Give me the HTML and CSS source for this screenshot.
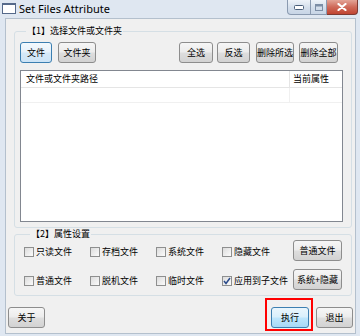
FILE: index.html
```html
<!DOCTYPE html>
<html lang="zh-CN">

<head>
    <meta charset="UTF-8">
    <meta name="viewport" content="width=device-width, initial-scale=1.0">
    <title>Set Files Attribute</title>
    <link rel="stylesheet" href="styles.css">
</head>

<body>
    <div class="window">
        <div class="titlebar">
            <span class="app-icon"></span>
            <span class="title">Set Files Attribute</span>
            <div class="caption-buttons">
                <span class="cap cap-min">
                    <svg width="10" height="5" viewBox="0 0 10 5"><rect x="0.5" y="0.5" width="9" height="4" rx="1" fill="#fff" stroke="#4a5f7a"/></svg>
                </span>
                <span class="cap cap-max">
                    <svg width="8" height="7" viewBox="0 0 8 7"><rect x="0.5" y="0.5" width="7" height="6" fill="none" stroke="#7c8ea6"/><rect x="1" y="1" width="6" height="1.5" fill="#7c8ea6"/></svg>
                </span>
                <span class="cap cap-close">
                    <svg width="10" height="8" viewBox="0 0 10 8"><path d="M1.5 1 L8.5 7 M8.5 1 L1.5 7" stroke="#fff" stroke-width="2.2" stroke-linecap="round"/></svg>
                </span>
            </div>
        </div>

        <div class="client">
            <fieldset class="group group-files">
                <legend>【1】选择文件或文件夹</legend>
                <div class="toolbar">
                    <button class="btn btn-default w32">文件</button>
                    <button class="btn w38 ml6">文件夹</button>
                    <div class="toolbar-right">
                        <button class="btn w34">全选</button>
                        <button class="btn w33 ml4">反选</button>
                        <button class="btn w38 ml6">删除所选</button>
                        <button class="btn w39 ml5">删除全部</button>
                    </div>
                </div>
                <div class="listview">
                    <div class="lv-header">
                        <span class="col-path">文件或文件夹路径</span>
                        <span class="col-attr">当前属性</span>
                    </div>
                    <div class="lv-row">
                        <span class="col-path"></span>
                        <span class="col-attr"></span>
                    </div>
                </div>
            </fieldset>

            <fieldset class="group group-attrs">
                <legend>【2】属性设置</legend>
                <div class="attr-grid">
                    <label class="check"><span class="box"></span>只读文件</label>
                    <label class="check"><span class="box"></span>存档文件</label>
                    <label class="check"><span class="box"></span>系统文件</label>
                    <label class="check"><span class="box"></span>隐藏文件</label>
                    <button class="btn">普通文件</button>

                    <label class="check"><span class="box"></span>普通文件</label>
                    <label class="check"><span class="box"></span>脱机文件</label>
                    <label class="check"><span class="box"></span>临时文件</label>
                    <label class="check"><span class="box checked"><svg width="8" height="8" viewBox="0 0 8 8"><path d="M1 4 L3 6.5 L7 1" fill="none" stroke="#2a4a8a" stroke-width="1.5"/></svg></span>应用到子文件</label>
                    <button class="btn">系统+隐藏</button>
                </div>
            </fieldset>

            <div class="footer">
                <button class="btn w37">关于</button>
                <button class="btn btn-hot w38 run">执行</button>
                <button class="btn w37 ml7">退出</button>
            </div>
        </div>
    </div>
</body>

</html>
```

FILE: styles.css
```css
body {
    margin: 0;
    font-family: "Noto Sans CJK SC", sans-serif;
}

.window {
    width: 360px;
    height: 336px;
    background-color: #dfe7f1;
    overflow: hidden;
}

.titlebar {
    display: flex;
    height: 18px;
}

.app-icon {
    width: 12px;
    height: 8px;
    margin: 3px 0 0 2px;
    background-color: #ffffff;
    border: 1px solid #55698a;
    border-top-width: 2px;
}

.title {
    margin-left: 3px;
    font-family: "Noto Sans", sans-serif;
    font-size: 11px;
    line-height: 17px;
    color: #000000;
}

.caption-buttons {
    display: flex;
    margin-left: auto;
    margin-right: 2px;
    height: 15px;
}

.cap {
    display: flex;
    align-items: center;
    justify-content: center;
    height: 14px;
    border: 1px solid #8a9ab0;
    border-top: none;
    background: linear-gradient(#eef3f9, #d3deeb 55%, #c8d5e6);
}

.cap-min {
    width: 22px;
    border-radius: 0 0 0 4px;
}

.cap-max {
    width: 15px;
    border-left: none;
}

.cap-close {
    width: 30px;
    border-left: none;
    border-color: #7d3a33;
    border-radius: 0 0 4px 0;
    background: linear-gradient(#e3a497, #cf6a5a 50%, #c04532);
}

.client {
    height: 314px;
    margin-left: 5px;
    width: 349px;
    border: 1px solid #b4c0cd;
    background-color: #f0f0f0;
    display: flex;
    flex-direction: column;
}

.group {
    margin: 0 3px 0 8px;
    border: 1px solid #d5dfe5;
    border-radius: 3px;
    min-width: 0;
}

.group legend {
    margin-left: 6px;
    padding: 0 1px;
    font-size: 9px;
    line-height: 12px;
    color: #000000;
}

.group-files {
    margin-top: 6px;
    padding: 5px 8px 5px 5px;
}

.group-attrs {
    padding: 0 8px 5px 9px;
}

.toolbar {
    display: flex;
    height: 21px;
    margin-bottom: 7px;
}

.toolbar-right {
    display: flex;
    margin-left: auto;
    margin-right: 5px;
}

.btn {
    height: 21px;
    padding: 0;
    border: 1px solid #8d8d8d;
    border-radius: 3px;
    background: linear-gradient(#f6f6f6, #ececec 48%, #dedede 52%, #d2d2d2);
    font-family: "Noto Sans CJK SC", sans-serif;
    font-size: 9px;
    color: #000000;
}

.btn-default {
    border-color: #3c7fb1;
    background: linear-gradient(#f4f9fd, #e6f1fa 48%, #d6e9f8 52%, #cde4f6);
}

.btn-hot {
    border-color: #3c7fb1;
    background: linear-gradient(#eaf6fd, #d9f0fc 48%, #bee6fd 52%, #a7d9f5);
}

.run {
    position: relative;
    margin-left: auto;
}

.run::after {
    content: "";
    position: absolute;
    top: -10px;
    left: -7px;
    right: -5px;
    bottom: -4px;
    border: 2px solid #ff0000;
}

.w32 { width: 32px; }
.w33 { width: 33px; }
.w34 { width: 34px; }
.w37 { width: 37px; }
.w38 { width: 38px; }
.w39 { width: 39px; }
.ml4 { margin-left: 4px; }
.ml5 { margin-left: 5px; }
.ml6 { margin-left: 6px; }
.ml7 { margin-left: 7px; }

.listview {
    height: 150px;
    border: 1px solid #828790;
    background-color: #ffffff;
}

.lv-header,
.lv-row {
    display: flex;
    font-size: 9px;
    color: #000000;
}

.lv-header {
    height: 16px;
    line-height: 16px;
    border-bottom: 1px solid #e5e5e5;
}

.lv-row {
    height: 14px;
    border-bottom: 1px solid #f0f0f0;
}

.col-path {
    width: 263px;
    padding-left: 5px;
    border-right: 1px solid #e5e5e5;
}

.col-attr {
    padding-left: 3px;
}

.lv-row .col-path {
    border-right-color: #f0f0f0;
}

.attr-grid {
    display: grid;
    grid-template-columns: 66px 66px 66px 71px 49px;
    grid-auto-rows: 21px;
    row-gap: 8px;
    align-items: center;
}

.check {
    display: flex;
    align-items: center;
    font-size: 9px;
    color: #000000;
    margin-top: 2px;
}

.box {
    display: flex;
    align-items: center;
    justify-content: center;
    width: 8px;
    height: 8px;
    margin-right: 2px;
    border: 1px solid #8e8f8f;
    background: linear-gradient(135deg, #dcdcdc, #fbfbfb);
}

.footer {
    display: flex;
    padding: 11px 2px 5px 2px;
}
```
